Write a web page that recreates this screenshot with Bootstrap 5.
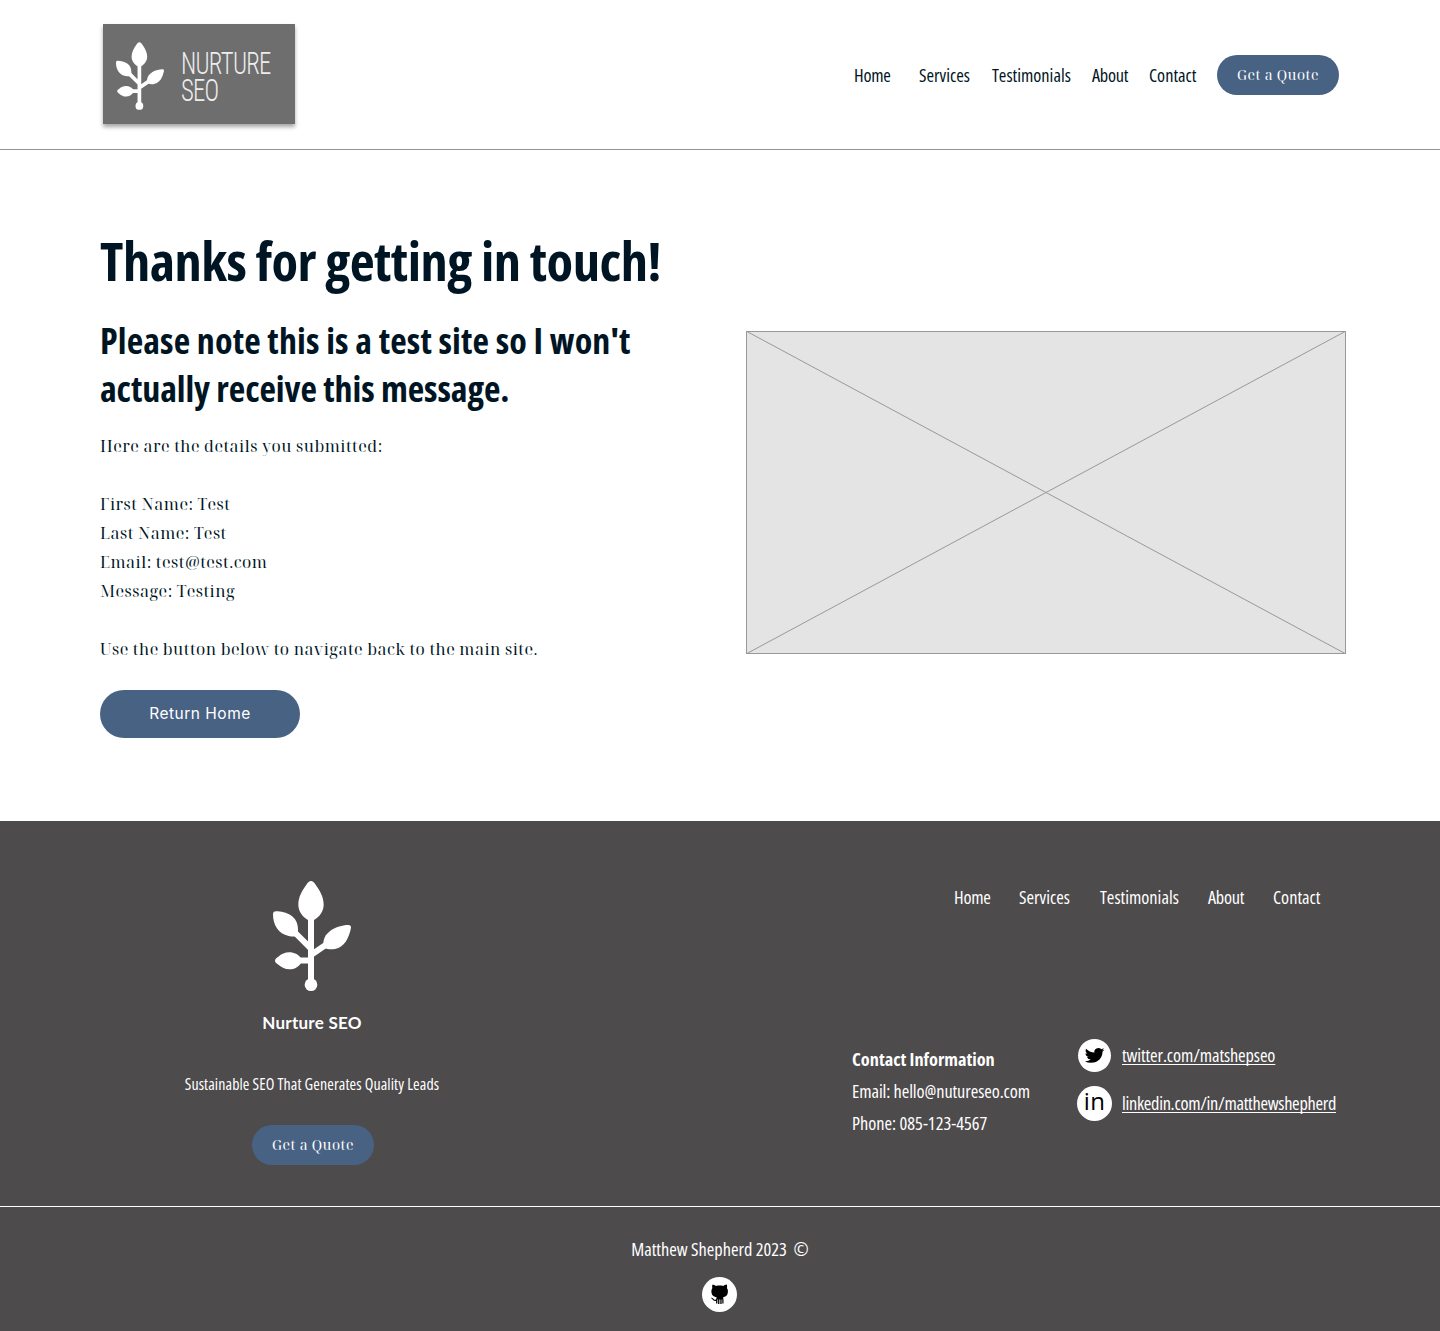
<!DOCTYPE html>
<html lang="en">
<head>
<meta charset="utf-8">
<meta name="viewport" content="width=device-width, initial-scale=1">
<title>Nurture SEO</title>
<link href="https://cdn.jsdelivr.net/npm/bootstrap@5.3.0/dist/css/bootstrap.min.css" rel="stylesheet">
<style>
  body { color: #001524; background: #fff; font-family: "Noto Serif Display", "Noto Serif", serif; letter-spacing: .5px; }
  .narrow { font-family: "Open Sans", sans-serif; font-stretch: 75%; font-size: 18.3px; font-weight: 500; letter-spacing: 0; line-height: 32px; white-space: nowrap; }
  a.narrow { color: inherit; text-decoration: none; }
  .site-header { height: 150px; border-bottom: 1px solid #949494; padding: 0 101px 0 103px; }
  .site-logo { width: 192px; height: 100px; background: #6e6e6e; box-shadow: 0 3px 4px rgba(0,0,0,.35); margin-top: 24px; padding: 18px 0 0 13px; }
  .logo-words { margin: 8px 0 0 17px; width: 94px; color: #ededed; font-family: Roboto, sans-serif; font-stretch: 75%; font-weight: 350; font-size: 30.5px; line-height: 27px; letter-spacing: -.9px; transform: scaleX(.81); transform-origin: left; }
  .top-links { display: grid; grid-template-columns: 65px 73px 100px 57px 68px 122px; margin-top: 55px; height: 40px; align-items: center; }
  .quote-btn { --bs-btn-color: #fff; --bs-btn-bg: #486284; --bs-btn-hover-color: #fff; --bs-btn-hover-bg: #3a506d; width: 122px; height: 40px; padding: 0; font-size: 14px; line-height: 40px; letter-spacing: .5px; border: 0; }
  .return-btn { width: 200px; height: 48px; font-family: Inter, sans-serif; font-size: 15.5px; letter-spacing: .5px; margin-top: 26px; }
  .thanks { padding: 69px 94px 83px 100px; }
  .thanks h1 { font-size: 54.5px; font-weight: 700; line-height: 82px; margin: 0 0 16px; letter-spacing: -.5px; }
  .thanks h2 { font-size: 36px; font-weight: 700; line-height: 48px; margin: 0 0 19px; letter-spacing: .13px; }
  .tight { letter-spacing: -.08px; }
  .snug { letter-spacing: -.22px; }
  .details { font-size: 16px; line-height: 29px; }
  .picture-box { width: 600px; height: 323px; margin-top: 112px; }
  .site-footer { background: #4d4b4c; color: #fff; height: 510px; }
  .footer-main { height: 386px; border-bottom: 1px solid #fff; padding: 0 99px 0 100px; }
  .brand { width: 424px; padding-top: 60px; }
  .brand-name { font-family: Lato, sans-serif; font-weight: 700; font-size: 17px; letter-spacing: .25px; line-height: 24px; margin-top: 20px; }
  .tagline { font-size: 15.9px; line-height: 24px; margin: 37px 0 29px; letter-spacing: .1px; }
  .brand .quote-btn { margin-left: 2px; }
  .footer-right { width: 489px; padding-top: 60px; }
  .bottom-links { display: grid; grid-template-columns: 65px 81px 108px 65px 65px; margin-left: 102px; margin-bottom: 126px; }
  .contact-col { width: 225px; padding-top: 4px; flex: none; }
  .social { height: 48px; }
  .social svg { width: 36px; height: 36px; margin-right: 9px; flex: none; overflow: visible; }
  .social a.narrow { line-height: 24px; text-decoration: underline; text-decoration-thickness: 1px; text-underline-offset: 2px; text-decoration-skip-ink: none; }
  .social a.snug { letter-spacing: -.28px; }
  .social a.tight { letter-spacing: -.1px; }
  .copyright { padding-top: 26px; }
  .copyright svg { margin-top: 12px; }
</style>
</head>
<body>
<svg width="0" height="0" class="d-none" aria-hidden="true">
  <symbol id="plant" viewBox="309 47 234 330">
    <g fill="#fff">
      <path d="M423 47c-5 0-9 4-14 11-14 19-24 38-24 60 0 20 13 37 29 46h18c16-9 29-26 29-46 0-22-10-41-24-60-5-7-9-11-14-11z"/>
      <path d="M309 147c0-6 3-9 9-9 30 1 66 13 66 54 0 8 0 14-3 21-8 1-16 1-25-1-31-6-47-33-47-65z"/>
      <path d="M543 187c0-5-2-8-8-8-29 1-75 17-75 56 0 5 1 8 3 12 8 5 20 6 32 4 29-6 42-34 48-64z"/>
      <path d="M315 286c0-5 5-9 10-12 9-8 20-13 33-13 15 0 27 7 34 16v18c-7 9-18 17-34 17-13 0-23-6-33-14-5-4-10-7-10-12z"/>
      <circle cx="423" cy="358" r="19"/>
    </g>
    <path d="M423 150V350M376 203l47 47M470 237l-47 32M385 285.500h38" stroke="#fff" stroke-width="18" fill="none"/>
  </symbol>
</svg>

<header class="site-header d-flex justify-content-between align-items-start">
  <a class="site-logo d-flex align-items-start text-decoration-none" href="#">
    <svg width="48" height="68"><use href="#plant" width="48" height="68"/></svg>
    <div class="logo-words">NURTURE<br>SEO</div>
  </a>
  <nav class="top-links">
    <a class="narrow snug" href="#">Home</a><a class="narrow" href="#">Services</a><a class="narrow" href="#">Testimonials</a><a class="narrow snug" href="#">About</a><a class="narrow" href="#">Contact</a>
    <a class="btn rounded-pill quote-btn" href="#">Get a Quote</a>
  </nav>
</header>

<main class="thanks d-flex justify-content-between align-items-start">
  <div>
    <h1 class="narrow">Thanks for getting in touch!</h1>
    <h2 class="narrow">Please note this is a test site so I won't<br><span class="tight">actually receive this message.</span></h2>
    <div class="details">Here are the details you submitted:<br><br>First Name: Test<br>Last Name: Test<br>Email: test@test.com<br>Message: Testing<br><br>Use the button below to navigate back to the main site.</div>
    <a class="btn rounded-pill quote-btn return-btn d-flex align-items-center justify-content-center" href="#">Return Home</a>
  </div>
  <svg class="picture-box" viewBox="0 0 600 323">
    <rect x=".5" y=".5" width="599" height="322" fill="#e4e4e4" stroke="#999"/>
    <path d="M0 0l600 323M600 0L0 323" stroke="#999"/>
  </svg>
</main>

<footer class="site-footer">
  <div class="footer-main d-flex justify-content-between">
    <div class="brand d-flex flex-column align-items-center">
      <svg width="78" height="110"><use href="#plant" width="78" height="110"/></svg>
      <div class="brand-name">Nurture SEO</div>
      <div class="narrow tagline">Sustainable SEO That Generates Quality Leads</div>
      <a class="btn rounded-pill quote-btn" href="#">Get a Quote</a>
    </div>
    <div class="footer-right">
      <nav class="bottom-links">
        <a class="narrow snug" href="#">Home</a><a class="narrow" href="#">Services</a><a class="narrow" href="#">Testimonials</a><a class="narrow snug" href="#">About</a><a class="narrow" href="#">Contact</a>
      </nav>
      <div class="d-flex">
        <div class="contact-col narrow">
          <div class="fw-bold">Contact Information</div>
          <div class="tight">Email: hello@nutureseo.com</div>
          <div>Phone: 085-123-4567</div>
        </div>
        <div class="flex-shrink-0">
          <div class="social d-flex align-items-start">
            <svg viewBox="0 0 36 36"><circle cx="17.500" cy="16.500" r="16.500" fill="#fff"/><path transform="translate(7.800 7.300) scale(.82 .76)" d="M23.953 4.570a10 10 0 01-2.825.775 4.958 4.958 0 002.163-2.723c-.951.555-2.005.959-3.127 1.184a4.920 4.920 0 00-8.384 4.482C7.690 8.095 4.067 6.130 1.640 3.162a4.822 4.822 0 00-.666 2.475c0 1.710.870 3.213 2.188 4.096a4.904 4.904 0 01-2.228-.616v.060a4.923 4.923 0 003.946 4.827 4.996 4.996 0 01-2.212.085 4.936 4.936 0 004.604 3.417 9.867 9.867 0 01-6.102 2.105c-.390 0-.779-.023-1.170-.067a13.995 13.995 0 007.557 2.209c9.053 0 13.998-7.496 13.998-13.985 0-.210 0-.420-.015-.630A9.935 9.935 0 0024 4.590z"/></svg>
            <a class="narrow tight pt-1" href="#">twitter.com/matshepseo</a>
          </div>
          <div class="social d-flex align-items-start">
            <svg viewBox="0 0 36 36"><circle cx="17.500" cy="16.500" r="17.500" fill="#fff"/><text x="6.800" y="23" font-family="Open Sans, sans-serif" font-weight="400" font-size="24" letter-spacing=".5">in</text></svg>
            <a class="narrow snug pt-1" href="#">linkedin.com/in/matthewshepherd</a>
          </div>
        </div>
      </div>
    </div>
  </div>
  <div class="copyright d-flex flex-column align-items-center">
    <div class="narrow">Matthew Shepherd 2023&nbsp; ©</div>
    <svg width="36" height="36" viewBox="0 0 36 36"><circle cx="17.500" cy="17.500" r="17.500" fill="#fff"/><path d="M10.300 7.500c1.600.100 2.600.700 3.600 1.400 2.300-.500 5-.500 7.300 0 1-.700 2-1.300 3.500-1.400.600 1.300.500 2.500.200 3.600 1 1.300 1.200 2.900.900 4.700-.400 2.900-2.400 4.200-4.900 4.600.500.700.600 1.500.6 2.500v3.700h-1.200v-4.200h-.7v4.600h-1.300v-4.600h-.9v4.600h-1.300v-4.600h-.7v4.200h-1.300v-2.700c-1.700.4-2.800-.2-3.500-1.300-.4-.7-.9-1.300-1.700-1.700 1.600-.3 2.300.7 2.900 1.300.6.700 1.300.7 2.300.4.100-.8.200-1.500.7-2.200-2.700-.4-4.900-1.700-5.300-4.600-.3-1.800 0-3.400.9-4.700-.3-1.100-.4-2.300.1-3.600z"/></svg>
  </div>
</footer>
<script src="https://cdn.jsdelivr.net/npm/bootstrap@5.3.0/dist/js/bootstrap.bundle.min.js"></script>
</body>
</html>
